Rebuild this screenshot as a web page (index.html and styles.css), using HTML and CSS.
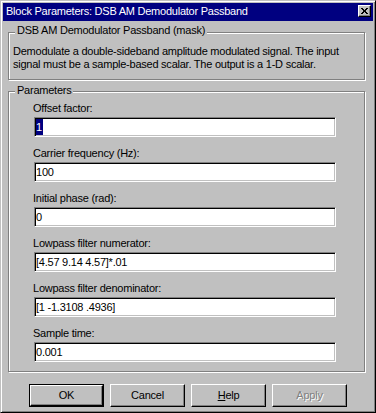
FILE: index.html
```html
<!DOCTYPE html>
<html>
<head>
<meta charset="utf-8">
<link rel="stylesheet" href="styles.css">
</head>
<body>
<div class="window">
  <div class="titlebar">
    <span class="title">Block Parameters: DSB AM Demodulator Passband</span>
    <span class="close-btn">
      <svg width="7" height="6" viewBox="0 0 7 6" shape-rendering="crispEdges">
        <path d="M0 0h2v1h-2z M5 0h2v1h-2z M1 1h2v1h-2z M4 1h2v1h-2z M2 2h3v1h-3z M2 3h3v1h-3z M1 4h2v1h-2z M4 4h2v1h-2z M0 5h2v1h-2z M5 5h2v1h-2z" fill="#000"/>
      </svg>
    </span>
  </div>

  <div class="group group-mask">
    <div class="group-title">DSB AM Demodulator Passband (mask)</div>
    <div class="description">Demodulate a double-sideband amplitude modulated signal. The input<br>signal must be a sample-based scalar. The output is a 1-D scalar.</div>
  </div>

  <div class="group group-params">
    <div class="group-title">Parameters</div>
    <div class="params">
      <div class="param">
        <div class="label">Offset factor:</div>
        <div class="field"><span class="selected">1</span></div>
      </div>
      <div class="param">
        <div class="label">Carrier frequency (Hz):</div>
        <div class="field">100</div>
      </div>
      <div class="param">
        <div class="label">Initial phase (rad):</div>
        <div class="field">0</div>
      </div>
      <div class="param">
        <div class="label">Lowpass filter numerator:</div>
        <div class="field">[4.57 9.14 4.57]*.01</div>
      </div>
      <div class="param">
        <div class="label">Lowpass filter denominator:</div>
        <div class="field">[1 -1.3108 .4936]</div>
      </div>
      <div class="param">
        <div class="label">Sample time:</div>
        <div class="field">0.001</div>
      </div>
    </div>
  </div>

  <div class="buttons">
    <div class="btn btn-default"><span class="btn-face">OK</span></div>
    <div class="btn"><span class="btn-face">Cancel</span></div>
    <div class="btn"><span class="btn-face"><span class="accel">H</span>elp</span></div>
    <div class="btn btn-disabled"><span class="btn-face">Apply</span></div>
  </div>
</div>
</body>
</html>
```

FILE: styles.css
```css
* {
  box-sizing: border-box;
}

html, body {
  margin: 0;
  padding: 0;
  background: #c0c0c0;
}

body {
  font-family: "Liberation Sans", Arial, sans-serif;
  font-size: 11px;
  line-height: 13px;
  letter-spacing: -0.24px;
  color: #000;
}

.window {
  width: 376px;
  height: 413px;
  background: #c0c0c0;
  border: 1px solid;
  border-color: #c0c0c0 #000 #000 #c0c0c0;
  box-shadow: inset 1px 1px 0 #fff, inset -1px -1px 0 #808080;
  padding: 2px;
  display: flex;
  flex-direction: column;
}

.titlebar {
  height: 18px;
  background: #000080;
  color: #fff;
  display: flex;
  align-items: flex-start;
  justify-content: space-between;
  padding-left: 3px;
  line-height: 17px;
}

.title {
  white-space: nowrap;
}

.close-btn {
  width: 13px;
  height: 12px;
  margin-top: 2px;
  margin-right: 2px;
  background: #c0c0c0;
  border: 1px solid;
  border-color: #fff #000 #000 #fff;
  box-shadow: inset -1px -1px 0 #808080;
  display: flex;
  align-items: center;
  justify-content: center;
  padding: 0 1px 1px 0;
}

.close-btn svg {
  display: block;
}

.group {
  border: 1px solid #808080;
  box-shadow: inset 1px 1px 0 #fff, 1px 1px 0 #fff;
  margin-left: 5px;
  margin-right: 8px;
}

.group-title {
  display: table;
  background: #c0c0c0;
  padding: 0 2px;
  margin-left: 6px;
  white-space: nowrap;
}

.group-mask {
  margin-top: 11px;
  height: 48px;
}

.group-mask .group-title {
  margin-top: -9px;
}

.description {
  margin-top: 8px;
  padding-left: 4px;
  white-space: nowrap;
}

.group-params {
  margin-top: 11px;
  padding-bottom: 9px;
}

.group-params .group-title {
  margin-top: -8px;
}

.params {
  margin-top: 5px;
  display: flex;
  flex-direction: column;
  gap: 10px;
}

.param {
  display: flex;
  flex-direction: column;
  gap: 2px;
}

.label {
  padding-left: 24px;
  white-space: nowrap;
}

.field {
  margin-left: 25px;
  width: 302px;
  height: 20px;
  background: #fff;
  border: 1px solid;
  border-color: #808080 #fff #fff #808080;
  box-shadow: inset 1px 1px 0 #000, inset -1px -1px 0 #c0c0c0;
  padding: 1px 1px 1px 1px;
  line-height: 16px;
  white-space: nowrap;
}

.selected {
  display: inline-block;
  background: #000080;
  color: #fff;
  line-height: 16px;
  padding-right: 1px;
}

.buttons {
  margin-top: 12px;
  padding-left: 26px;
  display: flex;
  gap: 6px;
}

.btn {
  width: 75px;
  height: 23px;
  border: 1px solid;
  border-color: #fff #000 #000 #fff;
  box-shadow: inset -1px -1px 0 #808080;
  display: flex;
}

.btn-face {
  flex: 1;
  display: flex;
  align-items: center;
  justify-content: center;
  padding-bottom: 1px;
}

.btn-default {
  border-color: #000;
  box-shadow: none;
}

.btn-default .btn-face {
  border: 1px solid;
  border-color: #fff #000 #000 #fff;
  box-shadow: inset -1px -1px 0 #808080;
  padding-bottom: 0;
}

.accel {
  text-decoration: underline;
}

.btn-disabled .btn-face {
  color: #808080;
  text-shadow: 1px 1px 0 #fff;
}
```
